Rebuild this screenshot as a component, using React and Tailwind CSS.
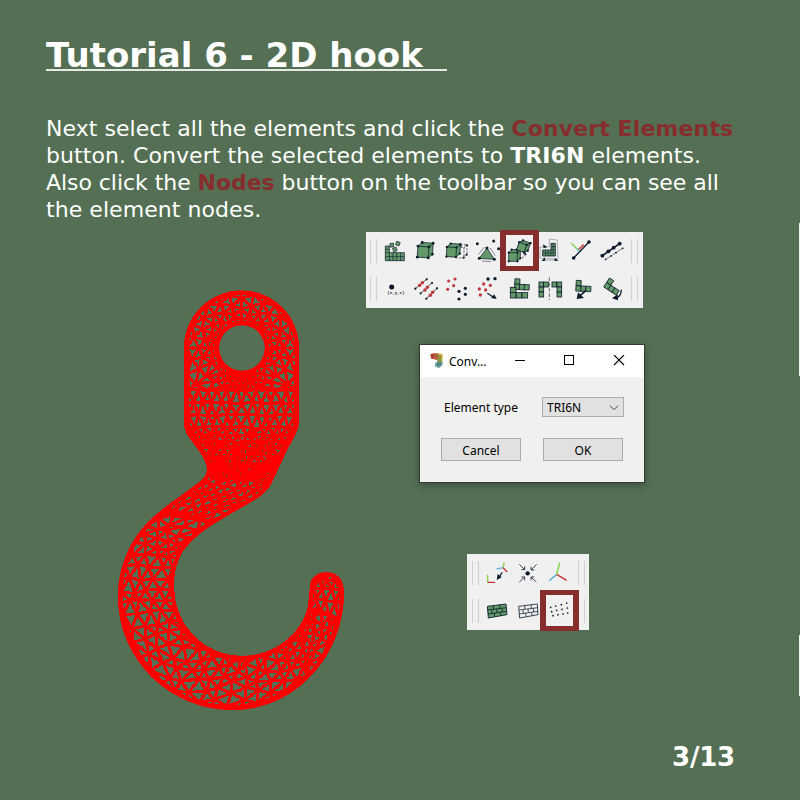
import React from 'react';

const INK = '#0b1a2b';
const LEAF = '#649a69';
const BERRY = '#c1383c';

/* ---------- finite element mesh of the hook ---------- */

// Cross sections of the hook: [outer x, outer y, inner x, inner y]
const shank = [
  [184, 390, 299, 390], [184, 425, 299, 425], [194, 444, 289, 446], [206, 465, 279, 464], [206, 476, 271, 483],
];
const neck = [
  [206, 476, 271, 483], [193, 487, 258, 498], [177, 497, 238, 509], [160, 512, 214, 523],
];
const bend = [
  [160, 512, 214, 523], [142, 525, 194, 538], [130, 541, 183, 550], [122, 563, 176, 565], [118, 590, 174, 586],
  [119, 610, 177, 608], [127, 637, 183, 625], [143, 667, 193, 638], [167, 690, 208, 647], [190, 703, 222, 653],
  [217, 709, 236, 655], [246, 709, 251, 655], [276, 700, 267, 651], [300, 685, 284, 643], [318, 669, 296, 633],
  [332, 647, 304, 621], [341, 620, 308, 608],
];
const tip = [[341, 620, 308, 608], [344, 597, 309, 594], [342, 583, 312, 581], [336, 574, 317, 574]];

const noise = (a, b) => {
  const v = Math.sin(a * 127.1 + b * 311.7) * 43758.5453;
  return v - Math.floor(v) - 0.5;
};

function section(stations, t) {
  const k = Math.min(Math.floor(t), stations.length - 2);
  const f = t - k;
  return stations[k].map((v, i) => v + (stations[k + 1][i] - v) * f);
}

// Fractions across a row; odd rows are shifted by half an element
function fractions(row, cols) {
  const out = [];
  if (row % 2 === 0) for (let c = 0; c <= cols; c++) out.push(c / cols);
  else {
    out.push(0);
    for (let c = 0; c < cols; c++) out.push((c + 0.5) / cols);
    out.push(1);
  }
  return out;
}

function strip(stations, rows, cols, inset, jitter, seed) {
  const grid = [];
  for (let r = 0; r <= rows; r++) {
    const [ax, ay, bx, by] = section(stations, (r / rows) * (stations.length - 1));
    const len = Math.hypot(bx - ax, by - ay);
    grid.push(
      fractions(r, cols).map((f, c) => {
        const u = inset / len + f * (1 - (2 * inset) / len);
        const j = f === 0 || f === 1 ? 0 : jitter;
        return [ax + (bx - ax) * u + noise(r + seed, c) * j, ay + (by - ay) * u + noise(c, r + seed) * j];
      }),
    );
  }
  return grid;
}

function ringAroundHole() {
  const cx = 241.6, cy = 348, sectors = 28, rings = 3;
  const grid = [];
  for (let s = 0; s <= sectors; s++) {
    const a = (s / sectors) * Math.PI * 2;
    const dx = Math.cos(a), dy = Math.sin(a);
    let outer = 54.5;
    if (dy > 0) outer = Math.min(54.5 / Math.max(Math.abs(dx), 0.001), 42 / Math.max(dy, 0.001));
    grid.push(
      fractions(s, rings).map((f, k) => {
        const j = f === 0 || f === 1 ? 0 : 2.5;
        const rad = 24 + (outer - 24) * Math.pow(f, 1.1) + noise(s % sectors, k) * j;
        return [cx + dx * rad, cy + dy * rad];
      }),
    );
  }
  return grid;
}

function triangles(grid) {
  const out = [];
  for (let r = 0; r < grid.length - 1; r++) {
    const even = grid[r % 2 === 0 ? r : r + 1];
    const odd = grid[r % 2 === 0 ? r + 1 : r];
    for (let i = 0; i < even.length - 1; i++) out.push([even[i], even[i + 1], odd[i + 1]]);
    for (let i = 0; i < even.length; i++) out.push([odd[i], odd[i + 1], even[i]]);
  }
  return out;
}

const elements = [
  ...triangles(ringAroundHole()),
  ...triangles(strip(shank, 11, 11, 4, 3, 3)),
  ...triangles(strip(neck, 5, 6, 2, 2.5, 31)),
  ...triangles(strip(bend, 31, 4, 3, 5, 57)),
  ...triangles(strip(tip, 4, 3, 2.5, 2, 91)),
];
const num = (v) => v.toFixed(1);
const meshPath = elements.map((t) => 'M' + t.map((p) => num(p[0]) + ' ' + num(p[1])).join('L') + 'Z').join('');
const nodePath = elements
  .flatMap((t) => t.flatMap((p, i) => [p, [(p[0] + t[(i + 1) % 3][0]) / 2, (p[1] + t[(i + 1) % 3][1]) / 2]]))
  .map((p) => 'M' + num(p[0]) + ' ' + num(p[1]) + 'h.1')
  .join('');

const outline =
  'M184 348A57.5 57.5 0 0 1 299 348L299 421C299 430 292 441 288 448L273 480C269 490 262 495 256 499L220 520C203 530 192 539 183 551' +
  'C176 562 174 573 174 587C174 625 204 656 242 656C280 656 309 626 309 597L310 586C311 568 340 568 343 585L344 590' +
  'C345 656 295 710 233 710C169 710 118 659 118 596C118 560 136 529 163 509C170 503 184 494 193 487C204 479 207 476 207 468' +
  'C206 458 196 447 191 440C186 433 184 429 184 421Z' +
  'M265 348A23 23 0 1 0 219 348A23 23 0 1 0 265 348Z';

function Hook() {
  return (
    <svg className="mt-[58px] h-[422px] w-[228px] shrink-0" viewBox="118 290 228 422" shapeRendering="crispEdges">
      <clipPath id="hook-body"><path d={outline} clipRule="evenodd" /></clipPath>
      <path d={outline} fill="#ff0000" fillRule="evenodd" />
      <g clipPath="url(#hook-body)">
        <path d={meshPath} fill="#546f53" stroke="#ff0000" strokeWidth="2.8" />
        <path d={nodePath} stroke="#ff0000" strokeWidth="3.2" strokeLinecap="square" />
        <path d={outline} fill="none" stroke="#ff0000" strokeWidth="8" />
      </g>
    </svg>
  );
}

/* ---------- toolbar icons (93 x 114 units per cell) ---------- */

const Dots = ({ at, r = 4.5, fill = INK }) => at.map(([x, y], i) => <circle key={i} cx={x} cy={y} r={r} fill={fill} />);

const Tiles = ({ at, w = 16, h = 16 }) =>
  at.map(([x, y], i) => <rect key={i} x={x} y={y} width={w} height={h} fill={LEAF} stroke={INK} strokeWidth="2.4" />);

const Line = ({ d, c = INK, w = 3, dash }) => (
  <path d={d} fill="none" stroke={c} strokeWidth={w} strokeDasharray={dash} />
);

const Cube = ({ x, y, s = 34, o = 12 }) => (
  <g>
    <path
      d={`M${x} ${y}l${o} ${-o}h${s}v${s}l${-o} ${o}h${-s}zM${x} ${y}h${s}v${s}M${x + s} ${y}l${o} ${-o}`}
      fill={LEAF} stroke={INK} strokeWidth="2.2"
    />
    <Dots r={s > 30 ? 4.3 : 3.4} at={[[x, y], [x + s, y], [x, y + s], [x + s, y + s], [x + o, y - o], [x + s + o, y - o], [x + s + o, y + s - o]]} />
  </g>
);

const mainIcons = [
  [
    <>
      <path d="M16 42h12v20h45v24H16z" fill={LEAF} stroke={INK} strokeWidth="2.2" />
      <Line w={1.8} d="M28 62v24M39 62v24M50 62v24M62 62v24M16 52h12M16 62h12M16 74h57" />
      <g fill={LEAF} stroke={INK} strokeWidth="1.8">
        <rect x="30" y="34" width="11" height="11" transform="rotate(-8 35 39)" />
        <rect x="48" y="29" width="11" height="11" transform="rotate(20 53 35)" />
        <rect x="39" y="47" width="11" height="11" transform="rotate(-14 44 52)" />
      </g>
    </>,
    <g transform="rotate(4 42 56)"><Cube x={20} y={44} s={33} o={12} /></g>,
    <>
      <Line w={2} dash="6 4" d="M56 38H75V68L65 78H46M56 46H66V78M66 46L75 38" />
      <Dots r={3.2} at={[[56, 42], [75, 40], [65, 77], [74, 68]]} />
      <g transform="rotate(3 34 56)"><Cube x={14} y={46} s={29} o={11} /></g>
    </>,
    <>
      <path d="M42 48L19 79L64 82Z" fill={LEAF} stroke={INK} strokeWidth="2.2" />
      <Dots at={[[42, 48], [19, 79], [64, 82], [13, 35], [62, 27], [77, 50]]} />
      <Line w={1.5} d="M17 67L34 45M51 48L67 71M27 87L54 89" />
    </>,
    <>
      <Cube x={14} y={62} s={26} o={9} />
      <g transform="rotate(20 56 43)"><Cube x={42} y={35} s={24} o={9} /></g>
      <Line w={2.2} dash="6 4" d="M64 66C63 73 58 78 48 78" />
      <path d="M58 67l6-6l4 8z" fill={INK} />
    </>,
    <>
      <path d="M48 34h13v38H23V54h25z" fill={LEAF} stroke={INK} strokeWidth="2.4" />
      <Line w={1.8} d="M32 54v18M40 54v18M48 54v18M54 34v38M48 44h13M23 63h38M48 54h13" />
      <Line w={1.3} c="#525c66" d="M43 46V21L67 24L69 82M15 45H40M15 45V78L69 82M23 84H65" />
      <path d="M24 37l13 8l-11 4zM20 87l9-11l2 10zM70 87l-10-10l-2 9z" fill={INK} />
    </>,
    <>
      <Line c="#85cf49" w={4} d="M16 34L37 55" />
      <Line c="#d34241" w={5} d="M38 53L53 38" />
      <Line w={4} d="M23 78L69 30" />
      <Dots r={5.5} at={[[23, 78], [69, 30]]} />
      <path d="M33 49l9 4l-7 6z" fill="#57bdd0" />
    </>,
    <>
      <Line w={5} d="M16 71L68 35" />
      <Dots r={5.8} at={[[16, 71], [34, 58], [50, 47], [68, 35]]} />
      <Line w={1.6} d="M25 83L78 48" />
      <Dots r={2.6} at={[[26, 82], [42, 72], [57, 62], [77, 49]]} />
    </>,
  ],
  [
    <>
      <Dots r={7.5} at={[[35, 51]]} />
      <text x="22" y="72" fontSize="12" fontWeight="700" fill={INK} textLength="51" className="font-['Liberation_Mono',monospace]">(x,y,z)</text>
    </>,
    <>
      <Line w={2.2} d="M11 58L49 26M27 72L65 37M44 88L80 53" />
      <Dots r={3.2} at={[[13, 56], [47, 28], [29, 70], [63, 39], [46, 86], [78, 55]]} />
      <Dots r={5.2} fill={BERRY} at={[[26, 46], [34, 38], [42, 60], [49, 52], [58, 76], [65, 67]]} />
    </>,
    <>
      <Dots r={4.7} fill={BERRY} at={[[20, 33], [39, 27], [35, 47], [17, 58]]} />
      <Dots r={4.7} at={[[51, 64], [70, 55], [70, 73], [51, 87]]} />
    </>,
    <>
      <Dots r={5} at={[[45, 27], [66, 26]]} />
      <Dots r={4.9} fill={BERRY} at={[[32, 42], [52, 46], [19, 57], [38, 60], [22, 75]]} />
      <Line w={3.5} d="M43 70L62 82" />
      <path d="M71 87l-17-3l10-11z" fill={INK} />
    </>,
    <>
      <g transform="rotate(3 50 45)"><Tiles at={[[32, 27], [32, 43], [47, 43], [61, 43]]} w={15} /></g>
      <Tiles at={[[19, 52], [19, 68], [37, 68], [54, 68]]} w={17} />
    </>,
    <>
      <Tiles at={[[12, 36], [26, 36], [12, 51], [12, 66]]} w={14} h={15} />
      <Tiles at={[[51, 36], [66, 36], [66, 51], [66, 66]]} w={14} h={15} />
      <Line w={1.8} dash="11 5" d="M43 22V90" />
    </>,
    <>
      <g transform="rotate(3 50 48)"><Tiles at={[[30, 32], [30, 48], [45, 48], [60, 48]]} w={15} /></g>
      <Line w={5} d="M60 61L38 81" />
      <path d="M32 87l4-20l18 17z" fill={INK} />
    </>,
    <>
      <g transform="rotate(33 42 52)"><Tiles at={[[23, 31], [23, 47], [38, 47], [53, 47]]} w={15} /></g>
      <Line w={4} d="M73 59C73 74 67 82 53 85" />
      <path d="M45 85l17-12l1 18z" fill={INK} />
    </>,
  ],
];

const viewIcons = [
  [
    <>
      <Line c="#85cf49" w={4} d="M17 62V86M63 41L67 25" />
      <Line c="#c93434" w={4} d="M17 85H39M63 41L76 54" />
      <Line c="#64b3d9" w={4} d="M63 41L44 45" />
      <Line w={3.5} d="M61 55L50 70" />
      <path d="M44 78l3-18l12 10z" fill={INK} />
    </>,
    <>
      <Dots r={6.5} at={[[44, 58]]} />
      <Line w={2.4} d="M19 31L35 47M25 47H35V37M71 31L54 48M54 38V48H64M19 84L35 69M25 69H35V79M70 84L54 69M54 79V69H64" />
    </>,
    <>
      <Line c="#64b3d9" w={4.5} d="M38 61L16 80" />
      <Line c="#c93434" w={4.5} d="M38 61L68 79" />
      <Line c="#85cf49" w={4.5} d="M38 61L47 26" />
    </>,
  ],
  [
    <>
      <path d="M16 43L72 36L75 68L19 78Z" fill={LEAF} stroke={INK} strokeWidth="2.6" />
      <Line w={2.4} d="M17 54L73 47M18 66L74 58M34 41L35 52M53 38L54 49M29 53L30 64M44 51L45 62M60 49L61 60M37 63L38 74M55 61L56 71" />
    </>,
    <>
      <path d="M17 43L73 36L75 68L20 78Z" fill="none" stroke={INK} strokeWidth="2.4" />
      <Line w={2.2} d="M18 54L74 47M19 66L75 58M35 41L36 52M54 38L55 49M30 53L31 64M45 51L46 62M61 49L62 60M38 63L39 74M56 61L57 71" />
    </>,
    <Dots r={2.6} at={[[20, 46], [35, 42], [52, 38], [68, 33], [23, 59], [38, 55], [54, 52], [70, 48], [27, 71], [42, 68], [57, 66], [71, 63]]} />,
  ],
];

const Grip = () => <div className="h-6 w-[7px] border-x border-[#d0d0d0]" />;

function Toolbar({ rows, className, highlight }) {
  return (
    <div className={`relative flex flex-col bg-[#f0f0f0] ${className}`}>
      {rows.map((icons, r) => (
        <div key={r} className="flex h-[38px] items-center">
          <Grip />
          <div className="mx-[3px] flex">
            {icons.map((icon, i) => (
              <svg key={i} className="h-[38px] w-[31px]" viewBox="0 0 93 114">{icon}</svg>
            ))}
          </div>
          <Grip />
        </div>
      ))}
      <div className={`absolute h-[41px] w-[39px] border-x-[6px] border-y-[5px] border-[#872d2d] ${highlight}`} />
    </div>
  );
}

/* ---------- dialog ---------- */

function AppIcon() {
  return (
    <svg className="mt-[8px] h-[15px] w-[13px]" viewBox="0 0 39 45">
      <path d="M1 4L13 1L37 3V35L28 44L16 41V30L23 27V17H4Z" fill="#8a8f4c" />
      <path d="M1 4L13 1V18L4 17Z" fill="#c53631" />
      <path d="M13 1L24 2V20H13Z" fill="#d4643a" />
      <path d="M24 2L37 3V14H24Z" fill="#ecc338" />
      <path d="M23 14H37V26H23Z" fill="#c6cf45" />
      <path d="M23 26H37V35L28 44L16 41V30Z" fill="#62b2bd" />
      <path d="M3 9H36M18 2V20M24 2V42M30 3V39M23 15H36M23 21H36M22 29H36M17 35H35" stroke="#55553f" strokeWidth="1.6" fill="none" />
    </svg>
  );
}

function ConvertDialog() {
  const button = 'flex h-[23px] w-20 items-center justify-center border border-[#adadad] bg-[#e1e1e1] pt-[2px]';
  return (
    <div className="ml-[53px] mt-9 h-[139px] w-[226px] border border-[#333a33] bg-[#f0f0f0] font-['Noto_Sans',sans-serif] text-[12px] leading-4 text-black shadow-[0_2px_8px_rgba(0,0,0,0.3)]">
      <div className="flex h-8 bg-white pl-[10px]">
        <AppIcon />
        <span className="ml-[6px] mt-[9px] w-[66px]">Conv...</span>
        <svg className="mt-[10px] h-[11px] w-[110px]" viewBox="0 0 110 11" fill="none" stroke="#000">
          <path d="M0 5.5H10M49.5 .5H58.5V9.5H49.5Z" shapeRendering="crispEdges" />
          <path d="M99 0L109 10M109 0L99 10" strokeWidth="1.1" />
        </svg>
      </div>
      <div className="mt-5 flex h-5 items-center pl-[24px]">
        <span className="w-[98px] pt-px">Element type</span>
        <div className="flex h-5 w-[82px] items-center justify-between border border-[#adadad] bg-[#e1e1e1] pl-1 pr-1">
          <span className="pt-px">TRI6N</span>
          <svg className="mt-px h-[6px] w-[10px]" viewBox="0 0 10 6" fill="none" stroke="#444"><path d="M1 .7L5 4.7L9 .7" /></svg>
        </div>
      </div>
      <div className="mt-[21px] flex gap-[22px] pl-[21px]">
        <div className={button}>Cancel</div>
        <div className={button}>OK</div>
      </div>
    </div>
  );
}

export default function App() {
  return (
    <main className="relative flex h-[800px] w-[800px] flex-col overflow-hidden bg-[#546f53] font-['DejaVu_Sans',sans-serif] text-white">
      <h1 className="ml-[46px] mt-[35px] h-9 w-[401px] whitespace-nowrap border-b-2 border-[#e4e9e4] text-[34px] font-bold leading-[41px]">
        Tutorial 6 - 2D hook
      </h1>
      <div className="ml-[46px] mt-[44px] h-[117px] whitespace-nowrap text-[22px] leading-[27px]">
        <p className="tracking-[0.05px]">Next select all the elements and click the <b className="tracking-[0.13px] text-[#872d2d]">Convert Elements</b></p>
        <p className="tracking-[0.06px]">button. Convert the selected elements to <b>TRI6N</b> elements.</p>
        <p className="tracking-[-0.05px]">Also click the <b className="text-[#872d2d]">Nodes</b> button on the toolbar so you can see all</p>
        <p className="tracking-[0.06px]">the element nodes.</p>
      </div>
      <section className="ml-[118px] flex h-[480px] gap-5">
        <Hook />
        <div className="flex flex-col">
          <Toolbar rows={mainIcons} className="h-[76px] w-[277px] pl-1" highlight="left-[134px] top-[-2px]" />
          <ConvertDialog />
          <Toolbar rows={viewIcons} className="ml-[101px] mt-[71px] h-[76px] w-[122px] pl-[5px]" highlight="left-[73px] top-9" />
        </div>
      </section>
      <footer className="mr-[65px] mt-[30px] text-right text-[26px] font-bold leading-[30px] tracking-[-0.2px]">3/13</footer>
      <div className="absolute right-0 top-[223px] h-[153px] w-px bg-[#f0f0f0]" />
      <div className="absolute right-0 top-[635px] h-[61px] w-px bg-[#f0f0f0]" />
    </main>
  );
}
